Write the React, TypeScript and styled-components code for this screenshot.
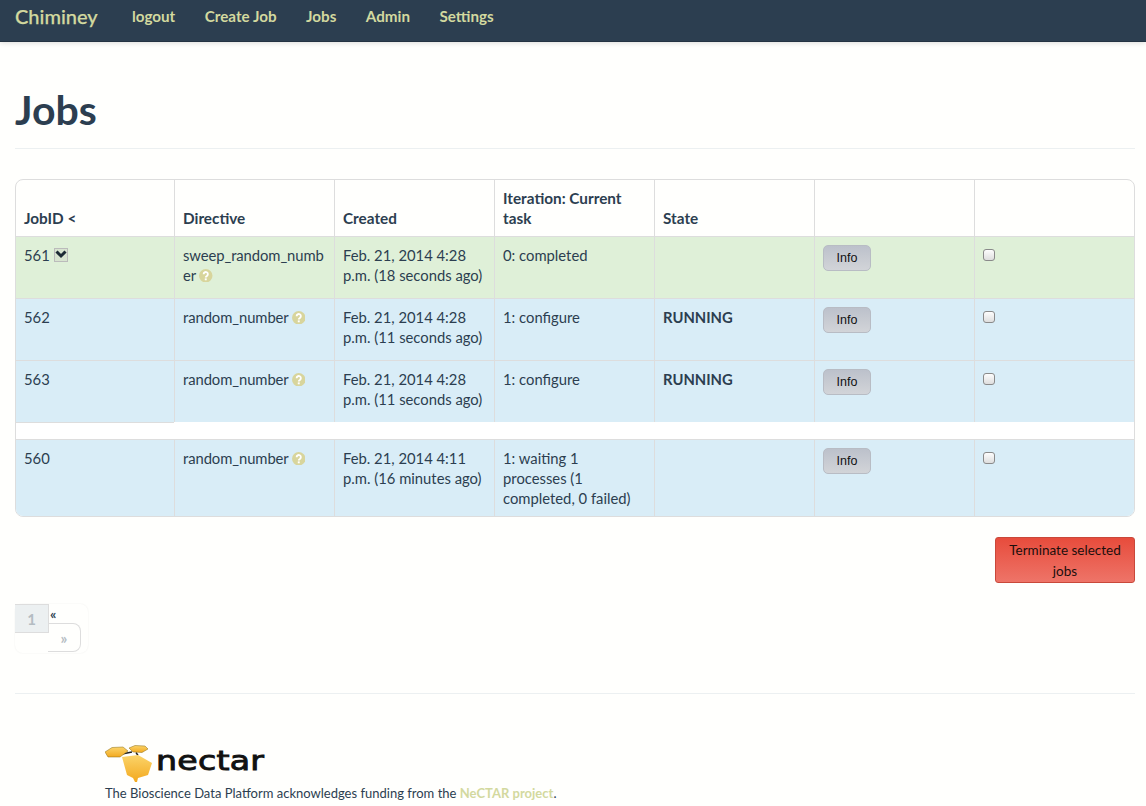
import React from "react";
import styled, { createGlobalStyle } from "styled-components";

const Global = createGlobalStyle`
  html, body { margin: 0; padding: 0; background: #fffffd; }
  body { font-family: Lato, "Liberation Sans", sans-serif; font-size: 14.8px; line-height: 20px; color: #2c3e50; }
  * { box-sizing: border-box; }
`;

const NavBar = styled.nav`
  height: 42px; background: #2c3e50; border-bottom: 1px solid #243342;
  box-shadow: 0 1px 5px rgba(0,0,0,.14);
  display: flex; align-items: flex-start; padding-left: 15px;
`;
const Brand = styled.a`
  font-size: 20px; line-height: 33px; color: #d3d99f; width: 117px; flex: none; font-weight: 500; -webkit-text-stroke: .25px #d3d99f;
`;
const NavLink = styled.a`
  font-size: 15.2px; font-weight: 700; line-height: 33px; color: #d3d99f; margin-right: 29.5px;
`;
const Main = styled.main`padding: 0 11px 0 15px;`;
const Title = styled.h1`
  margin: 0; padding-top: 44px; height: 107px; font-size: 41px; line-height: 48px; font-weight: 700; color: #2c3e50;
  border-bottom: 1px solid #ecf0f1;
`;
const TableWrap = styled.div`
  margin-top: 30px; border: 1px solid #ddd; border-radius: 8px; overflow: hidden; width: 1120px;
`;
const Table = styled.table`
  width: 1118px; table-layout: fixed; border-collapse: separate; border-spacing: 0;
`;
const Col = styled.col<{ $w: number }>`width: ${p => p.$w}px;`;
const Th = styled.th`
  text-align: left; vertical-align: bottom; padding: 8px; font-weight: 700; font-size: 15.3px; height: 56px;
  border-left: 1px solid #ddd; &:first-child { border-left: 0; }
`;
const Row = styled.tr<{ $tone: "green" | "blue" }>`
  background: ${p => (p.$tone === "green" ? "#dff0d8" : "#d9edf7")};
`;
const Td = styled.td<{ $h?: number }>`
  vertical-align: top; padding: 8px; border-top: 1px solid #ddd; border-left: 1px solid #ddd;
  height: ${p => p.$h ?? 62}px; white-space: pre-line;
  &:first-child { border-left: 0; }
`;
const Directive = styled.span`letter-spacing: -.08px;`;
const Bold = styled.strong`font-weight: 700;`;
const Spacer = styled.td`height: 17px; padding: 0; background: #fff;`;
const SpacerFirst = styled(Spacer)`border-top: 1px solid #ddd;`;
const SpacerRow = styled.tr``;
const Chevron = styled.button`
  display: inline-flex; width: 14px; height: 14px; vertical-align: 2px; margin-left: 4px; padding: 0;
  align-items: center; justify-content: center; background: #d8e4d0; border: 1px solid #bbb;
`;
const HelpIcon = styled.svg`width: 13.5px; height: 13.5px; vertical-align: -1px; margin-left: 3px;`;
const InfoButton = styled.button`
  display: block; width: 48px; height: 26px; border: 1px solid #b8bcc4; border-radius: 5px; padding: 0;
  background: linear-gradient(#bcc1cb, #d2d4d8); font: 12.5px/24px "Liberation Sans", Arial, sans-serif; color: #111;
`;
const Check = styled.span`
  display: block; width: 12px; height: 12px; margin-top: 4px; border: 1px solid #8a8a8a; border-radius: 3px;
  background: linear-gradient(#fdfdfd, #dedede);
`;
const Actions = styled.div`display: flex; justify-content: flex-end; margin-top: 20px; width: 1120px;`;
const Terminate = styled.button`
  width: 140px; height: 46px; padding: 2px 8px; border: 1px solid #c9483a; border-radius: 3px;
  background: linear-gradient(#e74c3c, #ee7468); color: #1a0f0d; font: 13.5px/21px Lato, sans-serif;
`;
const Pager = styled.div`
  margin-top: 21px; width: 73px; height: 49px; border-radius: 8px; box-shadow: 0 0 2px rgba(0,0,0,.07);
  display: flex; flex-wrap: wrap; align-content: flex-start;
`;
const PageCurrent = styled.span`
  width: 34px; height: 29px; background: #ecf0f1; border: 1px solid #ddd; border-left: 0;
  color: #b4bcc2; text-align: center; line-height: 28px; font-size: 15px; font-weight: 700;
`;
const PrevLink = styled.a`font-size: 14px; line-height: 20px; font-weight: 700; color: #2c3e50; width: 10px; padding-left: 1px;`;
const NextLink = styled.a`
  margin: -10px 0 0 33px; width: 33px; height: 29px; border: 1px solid #ddd; border-left: 0; border-radius: 0 8px 8px 0;
  color: #b4bcc2; text-align: center; line-height: 28px; font-size: 15px; font-weight: 700;
`;
const Divider = styled.hr`margin: 40px 0 0; width: 1120px; border: 0; border-top: 1px solid #ecf0f1;`;
const Footer = styled.footer`padding: 50px 0 0 90px;`;
const Logo = styled.div`display: flex; align-items: flex-start; height: 39px;`;
const LogoWord = styled.span`
  font-family: "DejaVu Sans", sans-serif; font-weight: 400; font-size: 27px; line-height: 30px; color: #111;
  -webkit-text-stroke: .9px #111; margin: 2px 0 0 -1px; letter-spacing: .2px;
  display: inline-block; transform: scaleX(1.23); transform-origin: left center;
`;
const Ack = styled.p`margin: 0; font-size: 13px; line-height: 20px; color: #2c3e50;`;
const Lnk = styled.a`color: #d3d99f; font-weight: 700;`;

const Help = () => (
  <HelpIcon viewBox="0 0 14 14">
    <circle cx="7" cy="7" r="7" fill="#d8d59c" />
    <path d="M4.8 5.4a2.2 2.2 0 1 1 3.4 1.8c-.8.5-1.2.8-1.2 1.6" fill="none" stroke="#fff" strokeWidth="1.9" />
    <rect x="6" y="9.7" width="2" height="2" fill="#fff" />
  </HelpIcon>
);

type Job = { id: string; dir: string; created: string; task: string; state?: string; tone: "green" | "blue"; chev?: boolean; h?: number };
const rows: Job[] = [
  { id: "561", dir: "sweep_random_numb\ner", created: "Feb. 21, 2014 4:28\np.m. (18 seconds ago)", task: "0: completed", tone: "green", chev: true },
  { id: "562", dir: "random_number", created: "Feb. 21, 2014 4:28\np.m. (11 seconds ago)", task: "1: configure", state: "RUNNING", tone: "blue" },
  { id: "563", dir: "random_number", created: "Feb. 21, 2014 4:28\np.m. (11 seconds ago)", task: "1: configure", state: "RUNNING", tone: "blue" },
];
const JobRow = ({ j }: { j: Job }) => (
  <Row $tone={j.tone}>
    <Td $h={j.h}>{j.id}{j.chev && (
      <Chevron><svg width="12" height="9" viewBox="0 0 12 9"><path d="M1.5 1.5 6 6l4.5-4.5" fill="none" stroke="#1c2a35" strokeWidth="3" /></svg></Chevron>
    )}</Td>
    <Td $h={j.h}><Directive>{j.dir}</Directive><Help /></Td>
    <Td $h={j.h}>{j.created}</Td>
    <Td $h={j.h}>{j.task}</Td>
    <Td $h={j.h}>{j.state && <Bold>{j.state}</Bold>}</Td>
    <Td $h={j.h}><InfoButton>Info</InfoButton></Td>
    <Td $h={j.h}><Check /></Td>
  </Row>
);

export default function App() {
  return (
    <>
      <Global />
      <NavBar>
        <Brand>Chiminey</Brand>
        <NavLink>logout</NavLink>
        <NavLink>Create Job</NavLink>
        <NavLink>Jobs</NavLink>
        <NavLink>Admin</NavLink>
        <NavLink>Settings</NavLink>
      </NavBar>
      <Main>
        <Title>Jobs</Title>
        <TableWrap>
          <Table>
            <colgroup>
              <Col $w={158} /><Col $w={160} /><Col $w={160} /><Col $w={160} /><Col $w={160} /><Col $w={160} /><Col $w={160} />
            </colgroup>
            <thead>
              <tr>
                <Th>JobID &lt;</Th><Th>Directive</Th><Th>Created</Th><Th>Iteration: Current task</Th><Th>State</Th><Th /><Th />
              </tr>
            </thead>
            <tbody>
              {rows.map(j => <JobRow key={j.id} j={j} />)}
              <SpacerRow><SpacerFirst /><Spacer colSpan={6} /></SpacerRow>
              <JobRow j={{ id: "560", dir: "random_number", created: "Feb. 21, 2014 4:11\np.m. (16 minutes ago)", task: "1: waiting 1\nprocesses (1\ncompleted, 0 failed)", tone: "blue", h: 77 }} />
            </tbody>
          </Table>
        </TableWrap>
        <Actions><Terminate>Terminate selected jobs</Terminate></Actions>
        <Pager>
          <PageCurrent>1</PageCurrent>
          <PrevLink>«</PrevLink>
          <NextLink>»</NextLink>
        </Pager>
        <Divider />
        <Footer>
          <Logo>
            <svg width="52" height="38" viewBox="0 0 52 38">
              <defs>
                <linearGradient id="hex" x1="0" y1="0" x2="0" y2="1">
                  <stop offset="0" stopColor="#fbd46a" />
                  <stop offset="1" stopColor="#f3a91f" />
                </linearGradient>
              </defs>
              <path d="M17 10 27 8M31 8.5l2 3" stroke="#222" strokeWidth="1.4" fill="none" />
              <path d="M0 8 7 3.5 18 3 23 7 15 13 3 13z" fill="url(#hex)" stroke="#8a6a10" strokeWidth=".5" />
              <path d="M24 4 30 1.5 40 2 43 5 37 8.5 28 8z" fill="url(#hex)" stroke="#8a6a10" strokeWidth=".5" />
              <path d="M17 13 33 11 47 19 43 31 33 34 32 38 30 38 28 34 22 31z" fill="url(#hex)" />
            </svg>
            <LogoWord>nectar</LogoWord>
          </Logo>
          <Ack>The Bioscience Data Platform acknowledges funding from the <Lnk>NeCTAR project</Lnk>.</Ack>
        </Footer>
      </Main>
    </>
  );
}
